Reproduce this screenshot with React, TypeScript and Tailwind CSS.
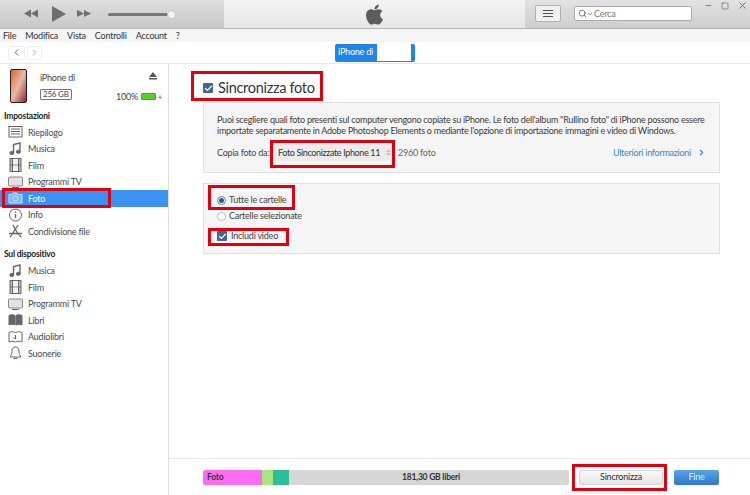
import { FaApple } from 'react-icons/fa';
import { ChevronLeft, ChevronRight, Search, ChevronDown, ChevronsUpDown, Minus, Square, X, Check } from 'lucide-react';

function SideIcon({ name, white }: { name: string; white?: boolean }) {
  const cls = `w-[15px] h-[14px] ${white ? 'text-[#cfe4fb]' : 'text-[#666]'}`;
  const props = { viewBox: '0 0 15 14', className: cls, fill: 'none', stroke: 'currentColor', strokeWidth: 1 };
  switch (name) {
    case 'summary':
      return (
        <svg {...props}>
          <rect x="1" y="1.500" width="13" height="10.500" />
          <path d="M3 4h9M3 6.500h9M3 9h9" />
        </svg>
      );
    case 'music':
      return (
        <svg {...props}>
          <path d="M5.500 11V2.500L12 1v8.500" strokeWidth="1.400" />
          <ellipse cx="3.800" cy="11" rx="2" ry="1.600" fill="currentColor" />
          <ellipse cx="10.300" cy="9.800" rx="2" ry="1.600" fill="currentColor" />
        </svg>
      );
    case 'film':
      return (
        <svg {...props}>
          <rect x="2" y="0.500" width="11" height="13" fill="#bdbdbd" />
          <path d="M2 7h11M4.500 0.500v13M10.500 0.500v13" />
          <rect x="5" y="1" width="5" height="5.500" fill="#f0f0f0" stroke="none" />
          <rect x="5" y="7.500" width="5" height="5.500" fill="#f0f0f0" stroke="none" />
        </svg>
      );
    case 'tv':
      return (
        <svg {...props}>
          <rect x="0.500" y="2" width="14" height="9" rx="1" fill="#e2e2e2" stroke="#888" />
          <path d="M4 12.500h7" />
        </svg>
      );
    case 'photo':
      return (
        <svg {...props}>
          <path d="M1 3.500h3l1-1.500h4l1 1.500h4v8.500H1z" fill="#7fb6f3" />
          <circle cx="7.500" cy="7.500" r="2.500" />
        </svg>
      );
    case 'info':
      return (
        <svg {...props}>
          <circle cx="7.500" cy="7" r="6" />
          <path d="M7.500 6v4M7.500 3.500v1.200" strokeWidth="1.400" />
        </svg>
      );
    case 'share':
      return (
        <svg {...props}>
          <path d="M5 1l5.500 10M10 1L3 12M1 9.500h13M2 13l1-1M13 13l-1.500-2" strokeWidth="1.300" />
        </svg>
      );
    case 'books':
      return (
        <svg {...props}>
          <path d="M1 2.500c2-1 4-1 6 0V12c-2-1-4-1-6 0zM8 2.500c2-1 4-1 6 0V12c-2-1-4-1-6 0z" fill="currentColor" />
        </svg>
      );
    case 'audio':
      return (
        <svg {...props}>
          <path d="M1 2.500c2-1 4-1 6.500 0 2.500-1 4.500-1 6.500 0V12c-2-1-4-1-6.500 0-2.500-1-4.500-1-6.500 0z" />
          <path d="M7.500 5v4M7.500 9l-2-1.500" />
        </svg>
      );
    default:
      return (
        <svg {...props}>
          <path d="M7.500 1c-2.500 0-3.500 2-3.500 4.500 0 2.500-1 4-2 5.500h11c-1-1.500-2-3-2-5.500C11 3 10 1 7.500 1zM5.500 12.500h4" />
        </svg>
      );
  }
}

function SideRow({ icon, label, selected }: { icon: string; label: string; selected?: boolean }) {
  return (
    <div className={`h-[16.5px] flex items-center pl-[8px] gap-[5px] ${selected ? 'bg-[#3a92f5] text-white' : 'text-[#4a4a4a]'}`}>
      <SideIcon name={icon} white={selected} />
      <span>{label}</span>
    </div>
  );
}

function CheckBox() {
  return (
    <span className="w-[10px] h-[10px] rounded-[1px] bg-[#45658f] flex items-center justify-center shrink-0">
      <Check className="w-[9px] h-[9px] text-white" strokeWidth={3.5} />
    </span>
  );
}

// evidenziazioni rosse sopra lo screenshot
const redBoxes = [
  'left-[2px] top-[188px] w-[109px] h-[20px]',
  'left-[191px] top-[71px] w-[132px] h-[30px]',
  'left-[270px] top-[140px] w-[125px] h-[28px]',
  'left-[208px] top-[185px] w-[87px] h-[25px]',
  'left-[208px] top-[228px] w-[81px] h-[18px]',
  'left-[572px] top-[464px] w-[95px] h-[27px]',
];

export default function App() {
  return (
    <div className="relative w-[750px] h-[495px] overflow-hidden bg-white text-[9px] tracking-[-0.22px] text-[#444] font-['Lato','Noto_Sans',sans-serif] flex flex-col">
      {/* Title bar */}
      <div className="h-[29px] flex border-b border-[#b5b5b5] shrink-0">
        <div className="w-[224px] bg-gradient-to-b from-[#dedede] to-[#c8c8c8] flex items-center pl-[24px]">
          <svg viewBox="0 0 68 18" className="w-[68px] h-[18px] text-[#6e6e6e]" fill="currentColor">
            <path d="M7 4.500v8L0 8.500zM14 4.500v8L7 8.500zM28 1v16l14-8zM53 5v7l7-3.500zM60 5v7l7-3.500z" />
          </svg>
          <div className="ml-[16px] w-[60px] h-[3px] bg-[#777] rounded-full" />
          <div className="w-[9px] h-[9px] -ml-[1px] rounded-full bg-[#f4f4f4] border border-[#c4c4c4]" />
        </div>
        <div className="w-[301px] bg-gradient-to-b from-[#f4f4f4] to-[#e6e6e6] flex items-center justify-center">
          <FaApple className="w-[21px] h-[23px] text-[#5c5c5c] ml-[-1px]" />
        </div>
        <div className="flex-1 bg-gradient-to-b from-[#e2e2e2] to-[#cecece] flex items-start relative">
          <div className="mt-[5px] ml-[10px] w-[26px] h-[17px] border border-[#b2b2b2] rounded-[2px] bg-[#efefef] flex flex-col items-center justify-center gap-[2px]">
            <div className="w-[10px] h-[1px] bg-[#555]" />
            <div className="w-[10px] h-[1px] bg-[#555]" />
            <div className="w-[10px] h-[1px] bg-[#555]" />
          </div>
          <div className="mt-[6px] ml-[13px] w-[118px] h-[15px] bg-white border border-[#aaa] rounded-[2px] flex items-center pl-[3px] text-[#777]">
            <Search className="w-[9px] h-[9px] text-[#555]" />
            <ChevronDown className="w-[6px] h-[6px] text-[#555]" strokeWidth={3} />
            <span className="ml-[1px]">Cerca</span>
          </div>
          <div className="ml-[12px] flex items-center gap-[8px] text-[#666]">
            <Minus className="w-[9px] h-[9px]" />
            <Square className="w-[8px] h-[8px]" />
            <X className="w-[11px] h-[11px]" />
          </div>
        </div>
      </div>

      {/* Menu */}
      <div className="h-[13px] bg-[#f5f5f5] flex items-center pl-[3px] gap-[9px] text-[#333] shrink-0">
        <span>File</span>
        <span>Modifica</span>
        <span>Vista</span>
        <span>Controlli</span>
        <span>Account</span>
        <span>?</span>
      </div>

      {/* Nav row */}
      <div className="h-[22px] border-b border-[#e8e8e8] flex items-center relative shrink-0">
        <div className="ml-[8px] flex gap-[2px]">
          <span className="w-[17px] h-[14px] border border-[#eee] rounded-[2px] flex items-center justify-center">
            <ChevronLeft className="w-[11px] h-[11px] text-[#555]" />
          </span>
          <span className="w-[15px] h-[14px] border border-[#eee] rounded-[2px] flex items-center justify-center">
            <ChevronRight className="w-[11px] h-[11px] text-[#aaa]" />
          </span>
        </div>
        <div className="ml-[293px] h-[18px] w-[80px] flex rounded-[2px] overflow-hidden border-b border-[#1f84ee]">
          <div className="w-[42px] bg-[#1f84ee] text-white flex items-center justify-end pr-[4px]">iPhone di</div>
          <div className="flex-1 bg-white" />
          <div className="w-[4px] bg-[#1f84ee]" />
        </div>
      </div>

      <div className="flex-1 flex min-h-0">
        {/* Sidebar */}
        <aside className="w-[169px] border-r border-[#dcdcdc] shrink-0">
          <div className="h-[44px] relative flex pt-[5px] pl-[10px]">
            <div className="w-[17px] h-[34px] rounded-[2px] bg-gradient-to-br from-[#d9622a] via-[#e8b8a8] to-[#8f2038] border-[1.500px] border-[#2e1f1f]" />
            <div className="ml-[13px] flex flex-col items-start">
              <span className="mt-[2px]">iPhone di</span>
              <span className="mt-[4px] border border-[#777] rounded-[1px] px-[2px] leading-[9px] text-[8px]">256 GB</span>
            </div>
            <svg viewBox="0 0 8 8" className="absolute left-[149px] top-[8px] w-[8px] h-[8px] text-[#555]" fill="currentColor">
              <path d="M4 0l4 5H0zM0 6h8v1.500H0z" />
            </svg>
            <div className="absolute left-[116px] top-[26px] flex items-center gap-[3px]">
              <span>100%</span>
              <span className="w-[15px] h-[7px] bg-[#5ecb2e] border border-[#6a8f55] rounded-[1px]" />
              <span className="text-[7px] -ml-[1px]">+</span>
            </div>
          </div>
          <div className="mt-[1px] h-[15px] pl-[4px] flex items-center font-bold text-[8.500px] text-[#222]">Impostazioni</div>
          <SideRow icon="summary" label="Riepilogo" />
          <SideRow icon="music" label="Musica" />
          <SideRow icon="film" label="Film" />
          <SideRow icon="tv" label="Programmi TV" />
          <SideRow icon="photo" label="Foto" selected />
          <SideRow icon="info" label="Info" />
          <SideRow icon="share" label="Condivisione file" />
          <div className="mt-[7px] h-[16px] pl-[4px] flex items-center font-bold text-[8.500px] text-[#222]">Sul dispositivo</div>
          <SideRow icon="music" label="Musica" />
          <SideRow icon="film" label="Film" />
          <SideRow icon="tv" label="Programmi TV" />
          <SideRow icon="books" label="Libri" />
          <SideRow icon="audio" label="Audiolibri" />
          <SideRow icon="bell" label="Suonerie" />
        </aside>

        {/* Main */}
        <main className="flex-1 flex flex-col min-w-0">
          <div className="flex-1 pl-[34px] pr-[30px]">
            <div className="h-[38px] flex items-center gap-[5px] pt-[10px]">
              <CheckBox />
              <span className="text-[14.500px] tracking-[-0.3px] text-[#333]">Sincronizza foto</span>
            </div>
            <div className="h-[71px] bg-[#f5f5f5] border border-[#e0e0e0] pt-[11px] pl-[13px]">
              <p className="leading-[11px] text-[#3c3c3c] tracking-[-0.25px] whitespace-nowrap">
                Puoi scegliere quali foto presenti sul computer vengono copiate su iPhone. Le foto dell'album "Rullino foto" di iPhone possono essere
                <br />
                importate separatamente in Adobe Photoshop Elements o mediante l'opzione di importazione immagini e video di Windows.
              </p>
              <div className="mt-[8px] flex items-center h-[17px] pr-[13px]">
                <span className="w-[54px] whitespace-nowrap">Copia foto da:</span>
                <span className="ml-[2px] w-[119px] h-[17px] bg-[#ececec] rounded-[2px] flex items-center pl-[5px] text-[#333] tracking-[-0.36px] whitespace-nowrap">
                  Foto Sinconizzate Iphone 11
                  <ChevronsUpDown className="ml-[5px] w-[7px] h-[7px] text-[#555]" />
                </span>
                <span className="ml-[6px] text-[#666]">2960 foto</span>
                <span className="ml-auto text-[#3a87c8] flex items-center gap-[6px] tracking-[-0.26px]">
                  Ulteriori informazioni
                  <ChevronRight className="w-[9px] h-[9px]" strokeWidth={3} />
                </span>
              </div>
            </div>
            <div className="mt-[10px] h-[71px] bg-[#f5f5f5] border border-[#e0e0e0] pt-[8px] pl-[13px]">
              <div className="h-[16px] flex items-center gap-[3px]">
                <span className="w-[9px] h-[9px] rounded-full border border-[#5a7aa5] bg-white flex items-center justify-center">
                  <span className="w-[5px] h-[5px] rounded-full bg-[#35588a]" />
                </span>
                <span>Tutte le cartelle</span>
              </div>
              <div className="h-[16px] flex items-center gap-[3px]">
                <span className="w-[9px] h-[9px] rounded-full border border-[#bbb] bg-white" />
                <span>Cartelle selezionate</span>
              </div>
              <div className="mt-[3px] h-[18px] flex items-center gap-[4px]">
                <CheckBox />
                <span>Includi video</span>
              </div>
            </div>
          </div>

          {/* Footer */}
          <div className="h-[37px] border-t border-[#e8e8e8] pl-[34px] pr-[30px] flex items-center gap-[10px] shrink-0">
            <div className="w-[366px] h-[15px] flex rounded-[2px] overflow-hidden font-bold text-[8.500px] text-[#333]">
              <div className="w-[59px] bg-[#fb6cf3] pl-[4px] flex items-center">Foto</div>
              <div className="w-[11px] bg-[#a9e57f]" />
              <div className="w-[16px] bg-[#2cbd9a]" />
              <div className="flex-1 bg-[#d6d6d6] flex items-center pl-[113px]">181,30 GB liberi</div>
            </div>
            <button className="w-[84px] h-[15px] rounded-[2px] border border-[#d5d5d5] bg-gradient-to-b from-[#f8f8f8] to-[#e6e6e6] text-[#333] flex items-center justify-center">
              Sincronizza
            </button>
            <button className="ml-[1px] w-[45px] h-[15px] rounded-[2px] bg-gradient-to-b from-[#5aa2e6] to-[#2f78cc] text-[#dfeeff] flex items-center justify-center">
              Fine
            </button>
          </div>
        </main>
      </div>

      {redBoxes.map((box) => (
        <div key={box} className={`absolute border-[3px] border-[#e0000f] ${box}`} />
      ))}
    </div>
  );
}
